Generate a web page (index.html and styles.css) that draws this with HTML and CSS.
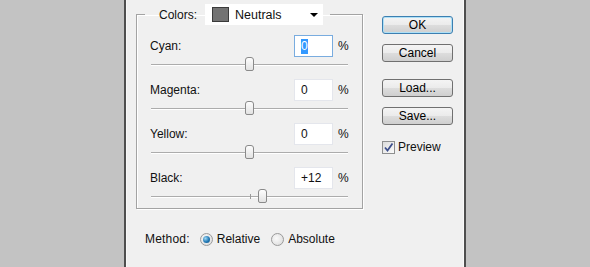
FILE: index.html
```html
<!DOCTYPE html>
<html>
<head>
    <title>Selective Color</title>
    <link rel="stylesheet" href="styles.css">
</head>
<body>
    <div class="dialog">
        <div class="main">
            <fieldset class="group">
                <legend class="group-title">
                    <span>Colors:</span>
                    <div class="select">
                        <span class="swatch"></span>
                        <span class="select-text">Neutrals</span>
                        <span class="caret"></span>
                    </div>
                </legend>
                <div class="rows">
                    <div class="row">
                        <div class="row-head">
                            <span class="row-label">Cyan:</span>
                            <span class="field focused"><span class="selected">0</span></span>
                            <span class="pct">%</span>
                        </div>
                        <div class="slider"><div class="track"><span class="thumb" style="left: 50%;"></span></div></div>
                    </div>
                    <div class="row">
                        <div class="row-head">
                            <span class="row-label">Magenta:</span>
                            <span class="field">0</span>
                            <span class="pct">%</span>
                        </div>
                        <div class="slider"><div class="track"><span class="thumb" style="left: 50%;"></span></div></div>
                    </div>
                    <div class="row">
                        <div class="row-head">
                            <span class="row-label">Yellow:</span>
                            <span class="field">0</span>
                            <span class="pct">%</span>
                        </div>
                        <div class="slider"><div class="track"><span class="thumb" style="left: 50%;"></span></div></div>
                    </div>
                    <div class="row">
                        <div class="row-head">
                            <span class="row-label">Black:</span>
                            <span class="field">+12</span>
                            <span class="pct">%</span>
                        </div>
                        <div class="slider"><div class="track"><span class="mark"></span><span class="thumb" style="left: 57%;"></span></div></div>
                    </div>
                </div>
            </fieldset>
            <div class="method">
                <span class="method-label">Method:</span>
                <span class="option"><span class="radio checked"></span>Relative</span>
                <span class="option"><span class="radio"></span>Absolute</span>
            </div>
        </div>
        <div class="side">
            <button class="btn default">OK</button>
            <button class="btn">Cancel</button>
            <button class="btn spaced">Load...</button>
            <button class="btn">Save...</button>
            <div class="preview">
                <span class="check">
                    <svg width="11" height="11" viewBox="0 0 11 11"><path d="M2 5.5 L4.5 8.5 L9.5 1.5" fill="none" stroke="#3d4f8c" stroke-width="1.8"/></svg>
                </span>
                Preview
            </div>
        </div>
    </div>
</body>
</html>
```

FILE: styles.css
```css
body {
    margin: 0;
    background: #c3c3c3;
    font-family: "Liberation Sans", Arial, sans-serif;
    font-size: 12px;
    color: #111;
}
.dialog {
    display: flex;
    width: 342px;
    height: 267px;
    margin-left: 124px;
    padding: 4px 0 0 10px;
    box-sizing: border-box;
    background: #f0f0f0;
    border-left: 2px solid #4e4e4e;
    border-right: 2px solid #4e4e4e;
    box-shadow: inset 1px 0 0 #f8f8f8, inset -1px 0 0 #fafafa;
}
.main { width: 227px; }

/* group box */
.group {
    margin: 0;
    padding: 10px 13px 3px 8px;
    border: 1px solid #a3a3a3;
    box-shadow: 1px 1px 0 #fff, inset 1px 1px 0 #fff;
}
.group-title {
    display: flex;
    align-items: center;
    gap: 8px;
    padding: 0 7px 0 14px;
}
.select {
    display: flex;
    align-items: center;
    width: 118px;
    height: 21px;
    padding-left: 7px;
    box-sizing: border-box;
    background: #fff;
    font-size: 12.5px;
}
.swatch {
    width: 15px;
    height: 13px;
    background: #727272;
    border: 1px solid #3a3a3a;
}
.select-text { margin-left: 6px; flex: 1; }
.caret {
    width: 0;
    height: 0;
    margin-right: 5px;
    border-left: 4px solid transparent;
    border-right: 4px solid transparent;
    border-top: 4px solid #000;
}

.rows { margin-left: 5px; }
.row { margin-bottom: 6px; }
.row:last-child { margin-bottom: 0; }
.row-head {
    display: flex;
    align-items: center;
    height: 22px;
}
.row-label { flex: 1; }
.field {
    width: 39px;
    height: 22px;
    padding-left: 6px;
    box-sizing: border-box;
    line-height: 20px;
    background: #fff;
    border: 1px solid #e4e6ec;
}
.field.focused { border-color: #79acdf; }
.selected {
    display: inline-block;
    line-height: 15px;
    background: #3399ff;
    color: #fff;
}
.pct { margin-left: 5px; width: 11px; }

/* sliders */
.slider {
    display: flex;
    align-items: center;
    height: 16px;
    padding: 0 1px;
}
.track {
    position: relative;
    flex: 1;
    height: 0;
    border-top: 1px solid #acacac;
    border-bottom: 1px solid #fff;
}
.thumb {
    position: absolute;
    top: -8px;
    width: 7px;
    height: 12px;
    margin-left: -5px;
    border: 1px solid #8a8a8a;
    border-radius: 3px 3px 2px 2px;
    background: linear-gradient(#fdfdfd, #e2e2e2);
}
.mark {
    position: absolute;
    left: 50%;
    top: -3px;
    width: 1px;
    height: 5px;
    background: #9a9a9a;
}

/* method */
.method {
    display: flex;
    align-items: center;
    height: 16px;
    margin-top: 22px;
    padding-left: 9px;
}
.method-label { margin-right: 10px; letter-spacing: 0.2px; }
.option {
    display: flex;
    align-items: center;
    margin-right: 11px;
}
.radio {
    position: relative;
    width: 11px;
    height: 11px;
    margin-right: 4px;
    border: 1px solid #9a9a9a;
    border-radius: 50%;
    background: radial-gradient(circle at 40% 40%, #fafafa, #d8d8d8);
}
.radio.checked::after {
    content: "";
    position: absolute;
    left: 2px;
    top: 2px;
    width: 7px;
    height: 7px;
    border-radius: 50%;
    background: radial-gradient(circle at 35% 35%, #9ed8f5, #2178b4 55%, #0f4f82);
}

/* buttons */
.side {
    display: flex;
    flex-direction: column;
    margin-left: 19px;
    padding-top: 12px;
}
.btn {
    width: 71px;
    height: 18px;
    margin: 0 0 10px;
    padding: 0;
    font-family: inherit;
    font-size: 12px;
    color: #000;
    border: 1px solid #707070;
    border-radius: 3px;
    background: linear-gradient(#f4f4f4 0%, #ebebeb 50%, #dddddd 51%, #cfcfcf 100%);
}
.btn.default {
    border-color: #3c7fb1;
    box-shadow: inset 0 0 0 1px #aee0f6;
}
.btn.spaced { margin-top: 7px; }
.preview {
    display: flex;
    align-items: center;
    margin-top: 5px;
}
.check {
    display: flex;
    align-items: center;
    justify-content: center;
    width: 11px;
    height: 11px;
    margin-right: 3px;
    border: 1px solid #8e8f8f;
    background: linear-gradient(135deg, #dcdcdc, #fbfbfb);
}
```
